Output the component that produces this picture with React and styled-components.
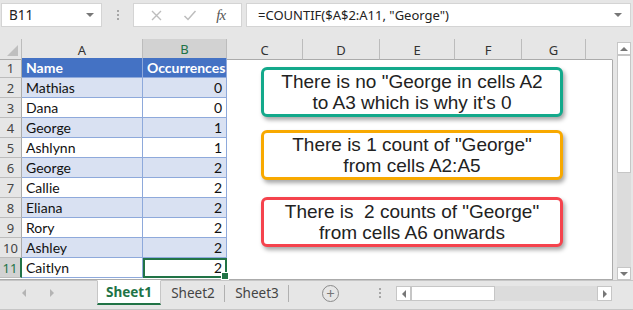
import React from "react";
import styled, { createGlobalStyle } from "styled-components";

const Global = createGlobalStyle`
  html, body { margin: 0; padding: 0; background: #e6e6e6; }
  * { box-sizing: border-box; }
`;

const GREEN = "#217346";
const COLS = [22, 121, 84, 76, 77, 75, 67, 64, 27];
const LETTERS = ["A", "B", "C", "D", "E", "F", "G"];
const gridCols = COLS.map((c) => c + "px").join(" ");

const rows = [
  ["Mathias", 0],
  ["Dana", 0],
  ["George", 1],
  ["Ashlynn", 1],
  ["George", 2],
  ["Callie", 2],
  ["Eliana", 2],
  ["Rory", 2],
  ["Ashley", 2],
  ["Caitlyn", 2],
];

const notes = [
  { color: "#13a98b", top: 28, lines: ['There is no "George in cells A2', "to A3 which is why it's 0"] },
  { color: "#f8a900", top: 91, lines: ['There is 1 count of "George"', "from cells A2:A5"] },
  { color: "#f5434d", top: 158, lines: ['There is  2 counts of "George"', "from cells A6 onwards"] },
];

const Frame = styled.div`
  width: 633px;
  height: 310px;
  overflow: hidden;
  background: #e6e6e6;
  font-family: "Noto Sans", "Open Sans", sans-serif;
  display: flex;
  flex-direction: column;
`;

const Toolbar = styled.div`
  height: 30px;
  margin-bottom: 9px;
  padding: 3px 2px 3px 1px;
  display: flex;
  align-items: stretch;
`;

const Field = styled.div`
  background: #fff;
  border: 1px solid #d4d4d4;
  display: flex;
  align-items: center;
  color: #222;
  font-size: 13.5px;
`;

const NameBox = styled(Field)`
  width: 101px;
  padding: 0 7px;
  justify-content: space-between;
`;

const Dots = styled.div`
  width: 31px;
  display: flex;
  flex-direction: column;
  align-items: center;
  justify-content: center;
  gap: 2px;
  span {
    width: 2px;
    height: 2px;
    background: #a6a6a6;
  }
`;

const FxBox = styled(Field)`
  width: 109px;
  justify-content: space-around;
  padding: 0 6px;
`;

const FormulaInput = styled(Field)`
  flex: 1;
  margin-left: 4px;
  padding: 0 8px 0 11px;
  justify-content: space-between;
  font-size: 13px;
`;

const Fx = styled.span`
  font-family: "Liberation Serif", serif;
  font-style: italic;
  font-size: 15px;
  color: #555;
  letter-spacing: -1px;
`;

const Main = styled.div`
  display: flex;
  height: 241px;
`;

const Sheet = styled.div`
  position: relative;
  width: 613px;
  height: 241px;
  background: #fff;
  border-right: 1px solid #ababab;
  border-bottom: 1px solid #ababab;
`;

const Row = styled.div`
  display: grid;
  grid-template-columns: ${gridCols};
  height: ${(p) => (p.$head ? 19 : 20)}px;
`;

const ColHead = styled.div`
  background: ${(p) => (p.$active ? "#d2d2d2" : "#e6e6e6")};
  color: ${(p) => (p.$active ? GREEN : "#333")};
  border-right: 1px solid ${(p) => (p.$last ? "transparent" : "#bcbcbc")};
  border-bottom: ${(p) => (p.$active ? `2px solid ${GREEN}` : "1px solid #ababab")};
  display: flex;
  align-items: center;
  justify-content: center;
  font-size: 13px;
  padding-top: 1px;
`;

const Corner = styled(ColHead)`
  position: relative;
  &::after {
    content: "";
    position: absolute;
    right: 3px;
    bottom: 3px;
    border-left: 11px solid transparent;
    border-bottom: 11px solid #bfbfbf;
  }
`;

const RowHead = styled.div`
  background: ${(p) => (p.$active ? "#d2d2d2" : "#e6e6e6")};
  color: ${(p) => (p.$active ? GREEN : "#444")};
  border-right: ${(p) => (p.$active ? `2px solid ${GREEN}` : "1px solid #ababab")};
  border-bottom: 1px solid #bcbcbc;
  display: flex;
  align-items: center;
  justify-content: center;
  font-size: 13px;
`;

const Cell = styled.div`
  position: relative;
  font-family: Lato, "Liberation Sans", sans-serif;
  font-size: 14px;
  color: #111;
  padding: 0 4px;
  display: flex;
  align-items: center;
  justify-content: ${(p) => (p.$num ? "flex-end" : "flex-start")};
  background: ${(p) => p.$bg || "#fff"};
  border-right: 1px solid ${(p) => (p.$table ? "#8ea9db" : "transparent")};
  border-bottom: 1px solid ${(p) => (p.$table ? "#8ea9db" : "transparent")};
  ${(p) => p.$header && "font-weight: 700; color: #fff;"}
  ${(p) =>
    p.$selected &&
    `outline: 2px solid ${GREEN}; outline-offset: -2px; z-index: 1;
     &::after { content: ""; position: absolute; right: -3px; bottom: -3px; width: 6px; height: 6px;
       background: ${GREEN}; border: 1px solid #fff; }`}
`;

const Note = styled.div`
  position: absolute;
  left: 261px;
  top: ${(p) => p.$top}px;
  width: 302px;
  height: 50px;
  border: 3px solid ${(p) => p.$color};
  border-radius: 6px;
  background: #fff;
  box-shadow: 2px 3px 4px rgba(0, 0, 0, 0.35);
  font-family: "Liberation Sans", Arial, sans-serif;
  font-size: 19px;
  line-height: 21px;
  color: #222;
  text-align: center;
  white-space: pre;
  display: flex;
  flex-direction: column;
  justify-content: center;
  z-index: 2;
`;

const VScroll = styled.div`
  width: 14px;
  margin: 3px 2px 0 4px;
  background: #dcdcdc;
  display: flex;
  flex-direction: column;
`;

const ScrollBtn = styled.div`
  height: ${(p) => p.$h}px;
  background: #fff;
  border: 1px solid #c6c6c6;
  display: flex;
  align-items: center;
  justify-content: center;
  ${(p) => p.$push && "margin-top: auto;"}
`;

const Arrow = styled.span`
  width: 0;
  height: 0;
  border-left: ${(p) => (p.$dir === "up" || p.$dir === "down" ? "4px solid transparent" : p.$dir === "right" ? "4px solid #777" : "none")};
  border-right: ${(p) => (p.$dir === "up" || p.$dir === "down" ? "4px solid transparent" : p.$dir === "left" ? "4px solid #777" : "none")};
  border-top: ${(p) => (p.$dir === "down" ? "4px solid #777" : p.$dir === "up" ? "none" : "4px solid transparent")};
  border-bottom: ${(p) => (p.$dir === "up" ? "4px solid #777" : p.$dir === "down" ? "none" : "4px solid transparent")};
  opacity: ${(p) => (p.$faint ? 0.45 : 1)};
`;

const TabBar = styled.div`
  height: 30px;
  display: flex;
  align-items: flex-start;
  border-bottom: 1px solid #c6c6c6;
`;

const Nav = styled.div`
  width: 97px;
  height: 25px;
  display: flex;
  align-items: center;
  gap: 24px;
  padding-left: 22px;
  border-top: 1px solid #c6c6c6;
`;

const Tab = styled.div`
  width: 64px;
  height: 25px;
  display: flex;
  align-items: center;
  justify-content: center;
  font-size: 13.5px;
  position: relative;
  border-top: 1px solid ${(p) => (p.$active ? "#fff" : "#c6c6c6")};
  ${(p) =>
    p.$active
      ? `background: #fff; color: ${GREEN}; font-weight: 700; border-bottom: 2px solid ${GREEN};
         border-left: 1px solid #c6c6c6; border-right: 1px solid #c6c6c6;`
      : `color: #444; &::after { content: ""; position: absolute; right: 0; top: 4px; bottom: 3px; width: 1px; background: #b0b0b0; }`}
`;

const TabRest = styled.div`
  flex: 1;
  height: 25px;
  display: flex;
  align-items: center;
  border-top: 1px solid #c6c6c6;
  padding-left: 33px;
`;

const Plus = styled.div`
  width: 17px;
  height: 17px;
  border: 1px solid #8a8a8a;
  border-radius: 50%;
  display: flex;
  align-items: center;
  justify-content: center;
  color: #777;
  font-size: 15px;
  line-height: 1;
`;

const HDots = styled(Dots)`
  width: auto;
  margin-left: 40px;
  margin-right: 15px;
`;

const HScroll = styled.div`
  width: 216px;
  height: 15px;
  background: #dcdcdc;
  display: flex;
  margin-top: 1px;
`;

const HBtn = styled.div`
  width: ${(p) => p.$w}px;
  background: #fff;
  border: 1px solid #c6c6c6;
  display: flex;
  align-items: center;
  justify-content: center;
  ${(p) => p.$push && "margin-left: auto;"}
`;

export default function App() {
  return (
    <Frame>
      <Global />
      <Toolbar>
        <NameBox>
          <span>B11</span>
          <Arrow $dir="down" />
        </NameBox>
        <Dots><span /><span /><span /></Dots>
        <FxBox>
          <svg width="13" height="13" viewBox="0 0 13 13">
            <path d="M2 2 L11 11 M11 2 L2 11" stroke="#bdbdbd" strokeWidth="1.4" />
          </svg>
          <svg width="14" height="13" viewBox="0 0 14 13">
            <path d="M1.5 7 L5 10.5 L12.5 2" stroke="#bdbdbd" strokeWidth="1.5" fill="none" />
          </svg>
          <Fx>fx</Fx>
        </FxBox>
        <FormulaInput>
          <span>=COUNTIF($A$2:A11, "George")</span>
          <Arrow $dir="down" />
        </FormulaInput>
      </Toolbar>

      <Main>
        <Sheet>
          <Row $head>
            <Corner />
            {LETTERS.map((l) => (
              <ColHead key={l} $active={l === "B"}>{l}</ColHead>
            ))}
            <ColHead $last />
          </Row>
          <Row>
            <RowHead>1</RowHead>
            <Cell $table $header $bg="#4472c4">Name</Cell>
            <Cell $table $header $bg="#4472c4">Occurrences</Cell>
          </Row>
          {rows.map(([name, n], i) => {
            const bg = i % 2 === 0 ? "#d9e1f2" : "#fff";
            const last = i === rows.length - 1;
            return (
              <Row key={i}>
                <RowHead $active={last}>{i + 2}</RowHead>
                <Cell $table $bg={bg}>{name}</Cell>
                <Cell $table $num $bg={bg} $selected={last}>{n}</Cell>
              </Row>
            );
          })}
          {notes.map((n) => (
            <Note key={n.top} $top={n.top} $color={n.color}>
              {n.lines.map((l) => (
                <div key={l}>{l}</div>
              ))}
            </Note>
          ))}
        </Sheet>
        <VScroll>
          <ScrollBtn $h={13}><Arrow $dir="up" /></ScrollBtn>
          <ScrollBtn $h={118} />
          <ScrollBtn $h={13} $push><Arrow $dir="down" /></ScrollBtn>
        </VScroll>
      </Main>

      <TabBar>
        <Nav>
          <Arrow $dir="left" $faint />
          <Arrow $dir="right" $faint />
        </Nav>
        <Tab $active>Sheet1</Tab>
        <Tab>Sheet2</Tab>
        <Tab>Sheet3</Tab>
        <TabRest>
          <Plus>+</Plus>
          <HDots><span /><span /><span /></HDots>
          <HScroll>
            <HBtn $w={15}><Arrow $dir="left" /></HBtn>
            <HBtn $w={84} />
            <HBtn $w={15} $push><Arrow $dir="right" /></HBtn>
          </HScroll>
        </TabRest>
      </TabBar>
    </Frame>
  );
}
